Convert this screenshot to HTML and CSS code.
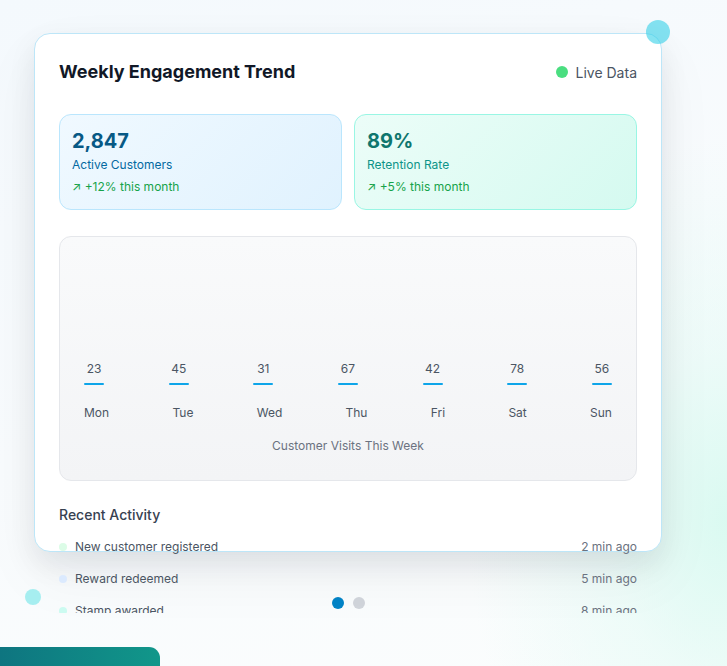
FILE: index.html
```html
<!DOCTYPE html>
<html lang="en">
<head>
<meta charset="utf-8">
<title>Weekly Engagement Trend</title>
<link rel="stylesheet" href="styles.css">
</head>
<body>
<div class="scene">
  <span class="orb orb-top"></span>
  <span class="orb orb-left"></span>
  <span class="corner-tab"></span>

  <section class="card">
    <header class="card-head">
      <h1 class="title">Weekly Engagement Trend</h1>
      <div class="live"><span class="live-dot"></span>Live Data</div>
    </header>

    <div class="stats">
      <div class="stat stat-blue">
        <div class="stat-value">2,847</div>
        <div class="stat-label">Active Customers</div>
        <div class="stat-trend">↗ +12% this month</div>
      </div>
      <div class="stat stat-teal">
        <div class="stat-value">89%</div>
        <div class="stat-label">Retention Rate</div>
        <div class="stat-trend">↗ +5% this month</div>
      </div>
    </div>

    <div class="chart">
      <div class="bars">
        <div class="col"><span class="val">23</span><span class="bar"></span></div>
        <div class="col"><span class="val">45</span><span class="bar"></span></div>
        <div class="col"><span class="val">31</span><span class="bar"></span></div>
        <div class="col"><span class="val">67</span><span class="bar"></span></div>
        <div class="col"><span class="val">42</span><span class="bar"></span></div>
        <div class="col"><span class="val">78</span><span class="bar"></span></div>
        <div class="col"><span class="val">56</span><span class="bar"></span></div>
      </div>
      <div class="days">
        <span>Mon</span><span>Tue</span><span>Wed</span><span>Thu</span><span>Fri</span><span>Sat</span><span>Sun</span>
      </div>
      <div class="caption">Customer Visits This Week</div>
    </div>

    <h2 class="activity-title">Recent Activity</h2>
    <ul class="activity">
      <li class="item"><span class="dot dot-green"></span><span class="item-text">New customer registered</span><span class="time">2 min ago</span></li>
      <li class="item"><span class="dot dot-blue"></span><span class="item-text">Reward redeemed</span><span class="time">5 min ago</span></li>
      <li class="item"><span class="dot dot-teal"></span><span class="item-text">Stamp awarded</span><span class="time">8 min ago</span></li>
    </ul>
  </section>

  <div class="pager">
    <span class="pager-dot active"></span>
    <span class="pager-dot"></span>
  </div>
</div>
</body>
</html>
```

FILE: styles.css
```css
* { box-sizing: border-box; }

html, body {
  margin: 0;
  padding: 0;
  height: 100%;
}

body {
  font-family: Inter, "Noto Sans", "Liberation Sans", sans-serif;
  background:
    radial-gradient(ellipse 260px 380px at 100% 78%, rgba(210, 249, 238, 0.8) 0%, rgba(222, 250, 243, 0.45) 45%, rgba(255, 255, 255, 0) 100%),
    linear-gradient(160deg, #f4f9fd 0%, #f8fbfd 50%, #fbfdfd 100%);
  overflow: hidden;
}

.scene {
  position: relative;
  width: 727px;
  height: 666px;
  padding: 33px 0 0 34px;
}

.orb {
  position: absolute;
  border-radius: 50%;
  z-index: 2;
}

.orb-top {
  left: 646px;
  top: 20px;
  width: 24px;
  height: 24px;
  background: rgba(34, 204, 230, 0.55);
}

.orb-left {
  left: 25px;
  top: 589px;
  width: 16px;
  height: 16px;
  background: #a6eef0;
}

.corner-tab {
  position: absolute;
  left: 0;
  top: 647px;
  width: 160px;
  height: 40px;
  border-top-right-radius: 11px;
  background: linear-gradient(90deg, #0e7580 0%, #11978a 100%);
}

.card {
  position: relative;
  width: 628px;
  height: 519px;
  padding: 24px;
  background: #ffffff;
  border: 1px solid #bde6f8;
  border-radius: 16px;
  box-shadow: 0 12px 28px rgba(15, 23, 42, 0.08), 0 24px 60px rgba(15, 23, 42, 0.05);
}

.card-head {
  display: flex;
  align-items: center;
  justify-content: space-between;
  height: 28px;
  margin-bottom: 28px;
}

.title {
  margin: 0;
  font-size: 18px;
  line-height: 28px;
  font-weight: 700;
  color: #111827;
}

.live {
  display: flex;
  align-items: center;
  gap: 8px;
  font-size: 14px;
  color: #4b5563;
}

.live-dot {
  width: 12px;
  height: 12px;
  border-radius: 50%;
  background: #4ade80;
}

.stats {
  display: grid;
  grid-template-columns: 1fr 1fr;
  gap: 12px;
  margin-bottom: 26px;
}

.stat {
  height: 96px;
  padding: 12px 12px;
  border-radius: 12px;
  border: 1px solid;
}

.stat-blue {
  border-color: #bae6fd;
  background: linear-gradient(135deg, #f0f9ff 0%, #e0f2fe 100%);
}

.stat-teal {
  border-color: #99f6e4;
  background: linear-gradient(135deg, #ecfdf8 0%, #d5faf0 100%);
}

.stat-value {
  font-size: 20px;
  line-height: 28px;
  font-weight: 700;
}

.stat-blue .stat-value { color: #075985; }
.stat-teal .stat-value { color: #0f766e; }

.stat-label {
  margin-top: 2px;
  font-size: 12px;
  line-height: 16px;
}

.stat-blue .stat-label { color: #0369a1; }
.stat-teal .stat-label { color: #0d9488; }

.stat-trend {
  margin-top: 6px;
  font-size: 12px;
  line-height: 16px;
  color: #16a34a;
}

.chart {
  height: 245px;
  padding: 24px 24px 0;
  border: 1px solid #e5e7eb;
  border-radius: 12px;
  background: linear-gradient(180deg, #f9fafb 0%, #f3f4f6 100%);
  margin-bottom: 24px;
}

.bars {
  display: flex;
  justify-content: space-between;
  align-items: flex-end;
  height: 124px;
}

.col {
  width: 20px;
  display: flex;
  flex-direction: column;
  align-items: center;
}

.val {
  font-size: 12px;
  line-height: 16px;
  color: #4b5563;
  margin-bottom: 6px;
  white-space: nowrap;
}

.bar {
  display: block;
  width: 20px;
  height: 2px;
  background: #0ea5e9;
  border-radius: 1px;
}

.days {
  display: flex;
  justify-content: space-between;
  margin-top: 20px;
  font-size: 12px;
  line-height: 16px;
  color: #4b5563;
}

.caption {
  margin-top: 17px;
  text-align: center;
  font-size: 12px;
  line-height: 16px;
  color: #6b7280;
}

.activity-title {
  margin: 0 0 6px;
  font-size: 14px;
  line-height: 20px;
  font-weight: 500;
  color: #374151;
}

.activity {
  list-style: none;
  margin: 0;
  padding: 0;
  height: 82px;
  overflow: hidden;
}

.item {
  display: flex;
  align-items: center;
  height: 32px;
  font-size: 12px;
  line-height: 16px;
}

.dot {
  width: 8px;
  height: 8px;
  border-radius: 50%;
  margin-right: 8px;
  flex: none;
}

.dot-green { background: #dcfce7; }
.dot-blue { background: #dbeafe; }
.dot-teal { background: #ccfbf1; }

.item-text {
  flex: 1;
  color: #4b5563;
}

.time {
  color: #6b7280;
}

.pager {
  display: flex;
  justify-content: center;
  gap: 9px;
  width: 628px;
  margin-top: 45px;
}

.pager-dot {
  width: 12px;
  height: 12px;
  border-radius: 50%;
  background: #d1d5db;
}

.pager-dot.active {
  background: #0284c7;
}
```
